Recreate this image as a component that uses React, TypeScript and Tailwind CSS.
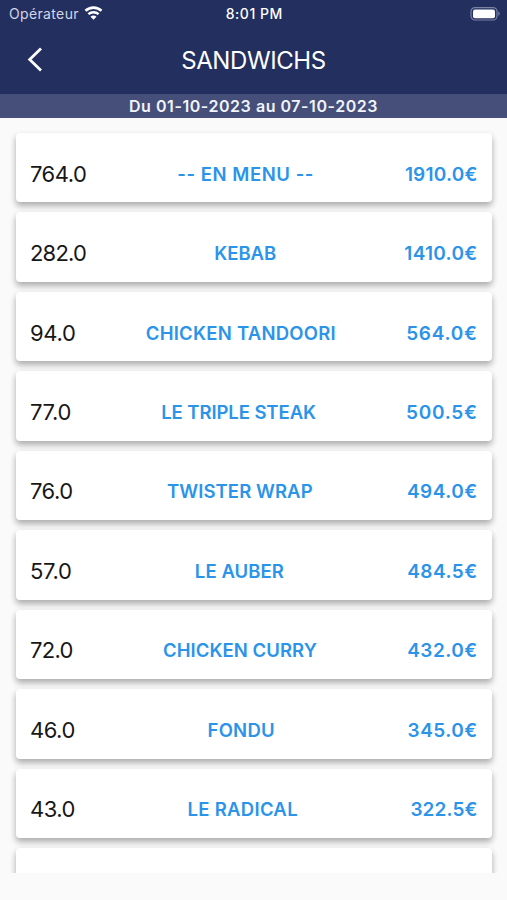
import React from "react";

interface Sale {
  quantity: string;
  name: string;
  total: string;
  quantityClass: string;
  nameClass: string;
  totalClass: string;
}

const SALES: Sale[] = [
  { quantity: "764.0", name: "-- EN MENU --", total: "1910.0€", quantityClass: "tracking-[-0.5px]", nameClass: "tracking-[0.55px]", totalClass: "tracking-[0.2px]" },
  { quantity: "282.0", name: "KEBAB", total: "1410.0€", quantityClass: "tracking-[-0.8px]", nameClass: "", totalClass: "tracking-[0.3px]" },
  { quantity: "94.0", name: "CHICKEN TANDOORI", total: "564.0€", quantityClass: "tracking-[-0.3px]", nameClass: "tracking-[0.25px]", totalClass: "tracking-[0.7px]" },
  { quantity: "77.0", name: "LE TRIPLE STEAK", total: "500.5€", quantityClass: "tracking-[-0.3px]", nameClass: "tracking-[-0.07px]", totalClass: "tracking-[0.7px]" },
  { quantity: "76.0", name: "TWISTER WRAP", total: "494.0€", quantityClass: "tracking-[-0.5px]", nameClass: "tracking-[0.08px]", totalClass: "tracking-[0.45px]" },
  { quantity: "57.0", name: "LE AUBER", total: "484.5€", quantityClass: "tracking-[-0.3px]", nameClass: "tracking-[0.07px]", totalClass: "tracking-[0.45px]" },
  { quantity: "72.0", name: "CHICKEN CURRY", total: "432.0€", quantityClass: "tracking-[-0.7px]", nameClass: "tracking-[0.05px]", totalClass: "tracking-[0.45px]" },
  { quantity: "46.0", name: "FONDU", total: "345.0€", quantityClass: "tracking-[-0.5px]", nameClass: "tracking-[0.25px]", totalClass: "tracking-[0.45px]" },
  { quantity: "43.0", name: "LE RADICAL", total: "322.5€", quantityClass: "tracking-[-0.5px]", nameClass: "tracking-[0.3px]", totalClass: "tracking-[0.1px]" },
];

const cardClass =
  "h-[69.44px] shrink-0 rounded-[4px] bg-white shadow-[0_4px_6px_rgba(0,0,0,0.24),0_3px_7px_rgba(0,0,0,0.1)]";

function StatusBar() {
  return (
    <div className="grid h-7 grid-cols-3 items-center pl-[9px] pr-[6px] text-[14px] text-white">
      <div className="flex items-center gap-[5px] pb-[2px]">
        <span className="tracking-[0.35px] text-[#d3d6e4]">Opérateur</span>
        <svg className="h-[14px] w-[19px]" viewBox="0 0 18 14" fill="none">
          <path d="M1 4.8C5.5.6 12.5.6 17 4.8" stroke="currentColor" strokeWidth="2.6" />
          <path d="M3.9 8.2C6.8 5.5 11.2 5.5 14.1 8.2" stroke="currentColor" strokeWidth="2.4" />
          <path d="M6 10.8C7.7 9.2 10.3 9.2 12 10.8L9 13.8Z" fill="currentColor" />
        </svg>
      </div>
      <span className="-ml-[1.5px] whitespace-nowrap pb-px text-center font-medium tracking-[0.5px]">8:01 PM</span>
      <svg className="h-[14px] w-[31px] justify-self-end" viewBox="0 0 31 14" fill="none">
        <rect x="1" y="0.6" width="26" height="12.4" rx="4" stroke="#7b82a4" strokeWidth="1.2" />
        <rect x="3" y="2.4" width="22" height="8.8" rx="2" fill="white" />
        <path d="M28.3 4.6C30.2 5.2 30.2 8.2 28.3 8.8Z" fill="#7b82a4" />
      </svg>
    </div>
  );
}

function SaleCard({ sale }: { sale: Sale }) {
  return (
    <div className={`${cardClass} flex items-center justify-between pl-[14.5px] pr-[14px] pt-3`}>
      <span className={`text-[22px] leading-7 text-[#171717] ${sale.quantityClass}`}>{sale.quantity}</span>
      <span className={`text-[18.5px] font-semibold leading-7 ${sale.nameClass}`}>{sale.name}</span>
      <span className={`pt-[2px] text-[19px] font-semibold leading-7 ${sale.totalClass}`}>{sale.total}</span>
    </div>
  );
}

export default function App() {
  return (
    <div className="flex h-[900px] w-[507px] flex-col overflow-hidden bg-[#fafafa] font-['Inter',sans-serif]">
      <header className="shrink-0 bg-[#232f5f]">
        <StatusBar />
        {/* Navigation bar */}
        <div className="grid h-[65.5px] grid-cols-[70px_1fr_70px] items-center">
          <button aria-label="Retour" className="pb-[2px] pl-[27px] text-white">
            <svg className="h-[25px] w-[16px]" viewBox="0 0 16 25" fill="none">
              <path d="M14 1.5L2.7 12.5L14 23.5" stroke="currentColor" strokeWidth="2.8" />
            </svg>
          </button>
          <h1 className="text-center text-[24px] tracking-[-0.4px] text-white">SANDWICHS</h1>
        </div>
        <div className="flex h-[24.5px] items-center justify-center bg-[#454f7a] text-[16px] font-semibold tracking-[0.55px] text-[#f1f4fb]">
          Du 01-10-2023 au 07-10-2023
        </div>
      </header>

      {/* Sales per product */}
      <main className="flex h-[754.5px] shrink-0 flex-col gap-[10px] overflow-hidden px-[15.5px] pt-[15px] text-[#2b94e9]">
        {SALES.map((sale) => (
          <SaleCard key={sale.name} sale={sale} />
        ))}
        <div className={cardClass} />
      </main>
    </div>
  );
}
